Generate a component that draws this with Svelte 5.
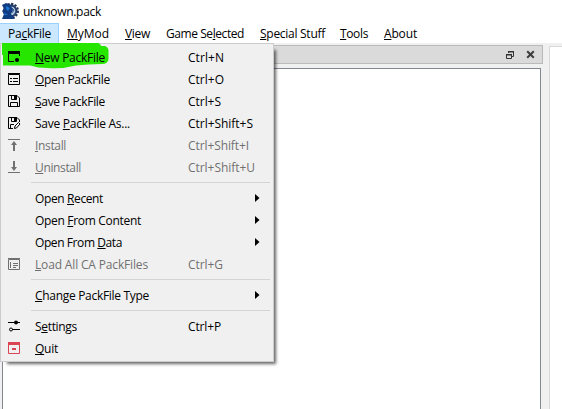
<script>
  const menus = [
    { text: 'Pa_ckFile', w: 43, box: 59, open: true },
    { text: '_MyMod', w: 42, box: 58 },
    { text: '_View', w: 25, box: 41 },
    { text: 'Game Se_lected', w: 78, box: 94 },
    { text: '_Special Stuff', w: 65, box: 80 },
    { text: '_Tools', w: 28, box: 44 },
    { text: '_About', w: 33, box: 49 }
  ];
  const items = [
    { icon: 'new', text: '_New PackFile', w: 70, key: 'Ctrl+N', kw: 36 },
    { icon: 'open', text: '_Open PackFile', w: 75, key: 'Ctrl+O', kw: 36 },
    { icon: 'save', text: '_Save PackFile', w: 70, key: 'Ctrl+S', kw: 33 },
    { icon: 'saveas', text: 'Save _PackFile As...', w: 95, key: 'Ctrl+Shift+S', kw: 65 },
    { icon: 'install', text: '_Install', w: 31, key: 'Ctrl+Shift+I', kw: 61, off: true },
    { icon: 'uninstall', text: '_Uninstall', w: 46, key: 'Ctrl+Shift+U', kw: 67, off: true },
    { sep: true },
    { text: 'Open _Recent', w: 68, sub: true },
    { text: 'Open _From Content', w: 106, sub: true },
    { text: 'Open From _Data', w: 87, sub: true },
    { icon: 'load', text: '_Load All CA PackFiles', w: 113, key: 'Ctrl+G', kw: 35, off: true },
    { sep: true },
    { text: '_Change PackFile Type', w: 114, sub: true },
    { sep: true },
    { icon: 'settings', text: 'S_ettings', w: 42, key: 'Ctrl+P', kw: 33 },
    { icon: 'quit', text: '_Quit', w: 23 }
  ];

  function fit(node, width) {
    const natural = node.getBoundingClientRect().width;
    node.style.letterSpacing = (width - natural) / node.textContent.length + 'px';
  }
</script>

{#snippet label(text, w)}
  {@const i = text.indexOf('_')}
  <span class="label" use:fit={w}>{#if i < 0}{text}{:else}{text.slice(0, i)}<u>{text[i + 1]}</u>{text.slice(i + 2)}{/if}</span>
{/snippet}

{#snippet glyph(name)}
  <svg class="icon" width="14" height="14" viewBox="0 0 14 14" fill="none" stroke="currentColor">
    {#if name === 'new'}
      <path d="M1.5 3V11.5H7M12.5 3V6" />
      <path d="M1 1h12v3H1z" fill="currentColor" stroke="none" />
      <circle cx="10" cy="10" r="2.1" fill="currentColor" stroke="none" />
    {:else if name === 'open'}
      <path d="M1.5 2.5h11v10h-11zM1 1.5h12M3 6.5h2M6 6.5h5M3 9.5h2M6 9.5h5" />
    {:else if name === 'load'}
      <path d="M1.5 2.5h11v10h-11zM1 1.5h12M3.5 5v6M6 6.5h5M6 8.5h5M6 10.5h3" />
    {:else if name === 'save'}
      <path d="M1.5 1.5H10L12.5 4V12.5H1.5zM4.5 1.5V5.5H9.5V1.5M3.5 12.5V8.5H10.5V12.5" />
      <path d="M7 2h2v3H7z" fill="currentColor" stroke="none" />
    {:else if name === 'saveas'}
      <path d="M6 12.5H1.5V1.5H10L12.5 4V6M4.5 1.5V5.5H9.5V1.5M3.5 12.5V8.5H7" />
      <path d="M7 2h2v3H7z" fill="currentColor" stroke="none" />
      <path d="M7.5 12.5L8 10L11.5 6.5L13 8L9.5 12z" />
    {:else if name === 'install'}
      <path d="M1 1.5h12" />
      <path d="M7 13V5" stroke-width="2" />
      <path d="M7 3L10 7H4z" fill="currentColor" stroke="none" />
    {:else if name === 'uninstall'}
      <path d="M1 12.5h12" />
      <path d="M7 1V8" stroke-width="2" />
      <path d="M7 11L10 7H4z" fill="currentColor" stroke="none" />
    {:else if name === 'settings'}
      <path d="M1 3.5h12M5 10.5h8" />
      <circle cx="9" cy="3.5" r="2" fill="currentColor" stroke="none" />
      <circle cx="4" cy="10.5" r="1.5" />
    {:else if name === 'quit'}
      <path d="M1.5 2.5h11v10h-11z" />
      <path d="M1 1h12v3H1zM5 7h4v2H5z" fill="currentColor" stroke="none" />
    {/if}
  </svg>
{/snippet}

<div class="window">
  <header class="title">
    <svg width="18" height="18" viewBox="0 0 18 18">
      <circle cx="10" cy="8.8" r="6.9" fill="#dce8f5" stroke="#203052" stroke-width="2.2" stroke-dasharray="2.2 1.4" />
      <circle cx="10" cy="8.8" r="5.3" fill="#b4cbe2" stroke="#243b68" stroke-width="1.9" />
      <path d="M1 3L5 1L10 3L12 8L10 12L14 17H1L3 12L1 9L3 7z" fill="#123c82" />
      <path d="M5 4L9 6L7 9L5 7zM4 11L7 13H3z" fill="#1976d2" />
      <path d="M10 5l3 3-2 3" fill="none" stroke="#31548c" />
    </svg>
    {@render label('unknown.pack', 78)}
  </header>
  <nav>
    {#each menus as m}
      <div class="menu" class:open={m.open} style:width="{m.box}px">{@render label(m.text, m.w)}</div>
    {/each}
  </nav>
  <main>
    <section class="dock">
      <div class="dockbar">
        <svg width="9" height="10" viewBox="0 0 9 10" fill="none" stroke="#333">
          <path d="M2.5 3V1.5H7.5V6.5H6M.5 4.5H5.5V8.5H.5z" /><path d="M2 1h6v1.5H2zM0 4h6v1.5H0z" fill="#333" stroke="none" />
        </svg>
        <svg width="9" height="9" viewBox="0 0 9 9"><path d="M1.2 1.2L7.8 7.8M7.8 1.2L1.2 7.8" stroke="#3c3c3c" stroke-width="2" /></svg>
      </div>
      <div class="tree"></div>
    </section>
    <section class="pane"></section>
  </main>

  <div class="shadow"></div>
  <div class="popup">
    <svg class="marker" width="110" height="27" viewBox="0 0 110 27">
      <path d="M2 0H98Q101 1 101 3H105Q108 4 108.5 7V16Q108 21 102 21Q88 21 76 22.5Q63 26 48 25Q38 25 30 22.5H3V12H2z" fill="#26e600" />
    </svg>
    {#each items as it}
      {#if it.sep}
        <div class="sep"></div>
      {:else}
        <div class="item" class:off={it.off} class:red={it.icon === 'quit'}>
          <div class="slot">{#if it.icon}{@render glyph(it.icon)}{/if}</div>
          <div class="name">{@render label(it.text, it.w)}</div>
          <div class="key">{#if it.key}{@render label(it.key, it.kw)}{/if}</div>
          {#if it.sub}<svg class="arrow" width="5" height="8" viewBox="0 0 5 8"><path d="M0 0L4.5 4L0 8z" fill="#000" /></svg>{/if}
        </div>
      {/if}
    {/each}
  </div>
</div>

<style>
  .window {
    position: relative;
    width: 562px;
    height: 409px;
    display: flex;
    flex-direction: column;
    overflow: hidden;
    background: #fff;
    color: #000;
    font: 12px/16px 'Open Sans', 'Noto Sans', sans-serif;
  }
  .label { display: inline-block; white-space: pre; }
  u { text-decoration-thickness: 1px; text-underline-offset: 1px; text-decoration-skip-ink: none; }
  .title { height: 23px; display: flex; gap: 4px; padding: 2px 0 0 1px; box-sizing: border-box; }
  .title .label { margin-top: 2px; }
  nav { height: 20px; display: flex; }
  .menu { box-sizing: border-box; padding: 3px 0 0 8px; }
  .menu.open { background: #cce8ff; border: 1px solid #99d1ff; border-left: 0; border-bottom: 0; padding-top: 2px; }
  main { flex: 1; display: flex; gap: 6px; background: #f0f0f0; }
  .dock { width: 543px; display: flex; flex-direction: column; gap: 4px; padding-top: 2px; box-sizing: border-box; }
  .dockbar {
    height: 19px; box-sizing: border-box; border: 1px solid #bababa; background: #dadada;
    display: flex; justify-content: flex-end; align-items: center; gap: 11px; padding-right: 7px;
  }
  .tree { flex: 1; margin: 0 2px 0 2px; border: 1px solid #828790; border-bottom: 0; background: #fff; }
  .pane { flex: 1; margin-top: 3px; border: 1px solid #d9d9d9; border-width: 1px 0 0 1px; background: #fff; }
  .shadow { position: absolute; left: 7px; top: 50px; width: 267px; height: 312px; box-shadow: 1px 1px 3px 1px rgba(0, 0, 0, .6); }
  .popup {
    position: absolute; left: 0; top: 43px; width: 274px; height: 319px; box-sizing: border-box;
    border: 1px solid #ccc; padding-top: 3px; background: #f0f0f0;
  }
  .marker { position: absolute; left: -1px; top: -1px; }
  .item { position: relative; height: 22px; display: flex; align-items: center; }
  .slot { width: 34px; height: 16px; padding-left: 6px; box-sizing: border-box; }
  .icon { display: block; }
  .name { width: 153px; height: 16px; }
  .key { width: 67px; height: 16px; white-space: nowrap; }
  .arrow { margin-bottom: 2px; }
  .off { color: #707070; }
  .red .slot { color: #da4453; }
  .sep { height: 9px; margin: 0 3px 0 30px; box-sizing: border-box; border-top: 3px solid #f0f0f0; background: linear-gradient(#d4d4d4 1px, #f0f0f0 1px); }
</style>
